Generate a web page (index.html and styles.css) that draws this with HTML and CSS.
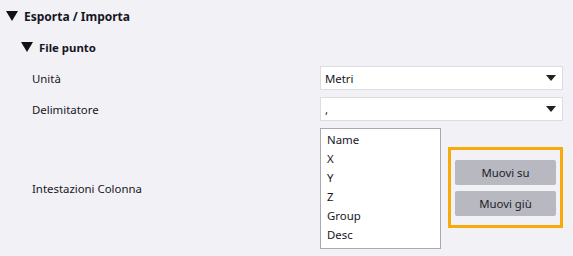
FILE: index.html
```html
<!DOCTYPE html>
<html lang="it">
<head>
<meta charset="UTF-8">
<title>Esporta / Importa</title>
<link rel="stylesheet" href="styles.css">
</head>
<body>
<div class="panel">
    <div class="section-head">
        <svg class="caret" width="12" height="10" viewBox="0 0 12 10"><polygon points="0,0 12,0 6,10" fill="#111"/></svg>
        <span>Esporta / Importa</span>
    </div>

    <div class="group">
        <div class="group-head">
            <svg class="caret" width="12" height="10" viewBox="0 0 12 10"><polygon points="0,0 12,0 6,10" fill="#111"/></svg>
            <span>File punto</span>
        </div>

        <div class="rows">
            <div class="label">Unità</div>
            <div class="select">
                <span>Metri</span>
                <svg width="10" height="6" viewBox="0 0 10 6"><polygon points="0,0 10,0 5,6" fill="#222"/></svg>
            </div>

            <div class="label">Delimitatore</div>
            <div class="select">
                <span>,</span>
                <svg width="10" height="6" viewBox="0 0 10 6"><polygon points="0,0 10,0 5,6" fill="#222"/></svg>
            </div>

            <div class="label">Intestazioni Colonna</div>
            <div class="columns">
                <ul class="listbox">
                    <li>Name</li>
                    <li>X</li>
                    <li>Y</li>
                    <li>Z</li>
                    <li>Group</li>
                    <li>Desc</li>
                </ul>
                <div class="move-box">
                    <button class="move-btn">Muovi su</button>
                    <button class="move-btn">Muovi giù</button>
                </div>
            </div>
        </div>
    </div>
</div>
</body>
</html>
```

FILE: styles.css
```css
body {
    margin: 0;
    background-color: #f2f1f6;
    color: #161625;
    font-family: "Noto Sans", sans-serif;
    font-size: 11.4px;
}

.panel {
    padding: 10px 10px 0 6px;
}

.section-head, .group-head {
    display: flex;
    align-items: center;
    gap: 6px;
    font-weight: bold;
    font-size: 12px;
    height: 12px;
}

.group {
    padding: 19px 0 0 15px;
}

.group-head {
    font-size: 11.4px;
}

.rows {
    display: grid;
    grid-template-columns: 288px 243px;
    row-gap: 7px;
    align-items: center;
    margin: 13px 0 0 11px;
}

.select {
    height: 22px;
    border: 1px solid #dcdce2;
    background-color: #fff;
    display: flex;
    align-items: center;
    justify-content: space-between;
    padding: 0 6px 0 4px;
}

.columns {
    display: flex;
    align-items: center;
    gap: 6px;
}

.listbox {
    list-style: none;
    margin: 0;
    padding: 1px 6px 3px;
    width: 108px;
    height: 115px;
    border: 1px solid #a9a9ae;
    background-color: #fff;
}

.listbox li {
    height: 19px;
    line-height: 19px;
}

.move-box {
    border: 3px solid #f7ab0a;
    width: 102px;
    padding: 10px 4px 9px;
    margin: 0 0 2px 1px;
    display: flex;
    flex-direction: column;
    gap: 6px;
}

.move-btn {
    height: 25px;
    border: none;
    border-radius: 2px;
    background-color: #b7b8c0;
    color: #1e1e2a;
    font-family: inherit;
    font-size: 11.4px;
}
```
